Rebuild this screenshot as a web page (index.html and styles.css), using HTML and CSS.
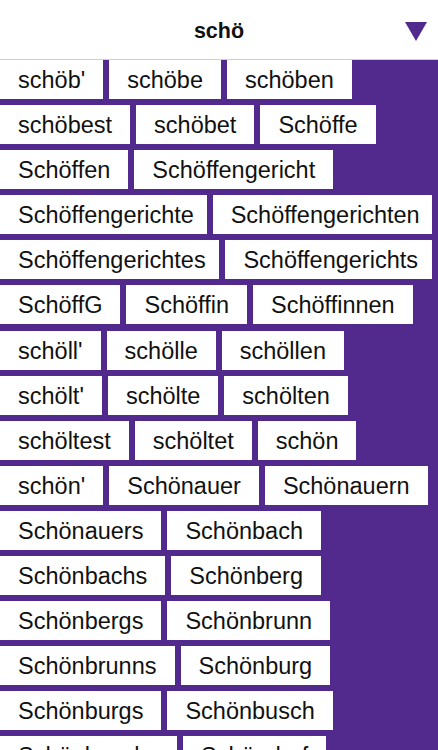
FILE: index.html
```html
<!DOCTYPE html>
<html lang="de">
<head>
<meta charset="utf-8">
<title>schö</title>
<link rel="stylesheet" href="styles.css">
</head>
<body>
<header class="bar">
  <span class="bar-side"></span>
  <h1 class="title">schö</h1>
  <svg class="menu-arrow" width="22" height="19" viewBox="0 0 22 19" aria-hidden="true"><polygon points="0,0 22,0 11,19" fill="#522a8e"/></svg>
</header>
<main class="words">
  <div class="row"><span class="chip">schöb'</span><span class="chip">schöbe</span><span class="chip">schöben</span></div>
  <div class="row"><span class="chip">schöbest</span><span class="chip">schöbet</span><span class="chip">Schöffe</span></div>
  <div class="row"><span class="chip">Schöffen</span><span class="chip">Schöffengericht</span></div>
  <div class="row"><span class="chip">Schöffengerichte</span><span class="chip">Schöffengerichten</span></div>
  <div class="row"><span class="chip">Schöffengerichtes</span><span class="chip">Schöffengerichts</span></div>
  <div class="row"><span class="chip">SchöffG</span><span class="chip">Schöffin</span><span class="chip">Schöffinnen</span></div>
  <div class="row"><span class="chip">schöll'</span><span class="chip">schölle</span><span class="chip">schöllen</span></div>
  <div class="row"><span class="chip">schölt'</span><span class="chip">schölte</span><span class="chip">schölten</span></div>
  <div class="row"><span class="chip">schöltest</span><span class="chip">schöltet</span><span class="chip">schön</span></div>
  <div class="row"><span class="chip">schön'</span><span class="chip">Schönauer</span><span class="chip">Schönauern</span></div>
  <div class="row"><span class="chip">Schönauers</span><span class="chip">Schönbach</span></div>
  <div class="row"><span class="chip">Schönbachs</span><span class="chip">Schönberg</span></div>
  <div class="row"><span class="chip">Schönbergs</span><span class="chip">Schönbrunn</span></div>
  <div class="row"><span class="chip">Schönbrunns</span><span class="chip">Schönburg</span></div>
  <div class="row"><span class="chip">Schönburgs</span><span class="chip">Schönbusch</span></div>
  <div class="row"><span class="chip">Schönbuschs</span><span class="chip">Schöndorf</span></div>
</main>
</body>
</html>
```
FILE: styles.css
```css
html, body {
  margin: 0;
  padding: 0;
}
body {
  width: 438px;
  height: 750px;
  overflow: hidden;
  background: #522a8e;
  font-family: "Liberation Sans", Arial, sans-serif;
  color: #111;
}
.bar {
  box-sizing: border-box;
  height: 60px;
  padding: 3px 11px 0 11px;
  background: #fff;
  border-bottom: 1px solid #cfcfcf;
  display: grid;
  grid-template-columns: 1fr auto 1fr;
  align-items: center;
}
.title {
  margin: 0;
  font-size: 21.5px;
  font-weight: bold;
  color: #111;
}
.menu-arrow {
  justify-self: end;
  display: block;
}
.words {
  box-sizing: border-box;
  width: 438px;
  padding-right: 6px;
  display: flex;
  flex-direction: column;
  gap: 6.1px;
}
.row {
  display: flex;
  gap: 6px;
}
.chip {
  box-sizing: border-box;
  min-width: 0;
  overflow: hidden;
  height: 39px;
  padding: 1px 18px 0 18px;
  line-height: 38px;
  font-size: 23.5px;
  background: #fff;
  white-space: nowrap;
}
```
